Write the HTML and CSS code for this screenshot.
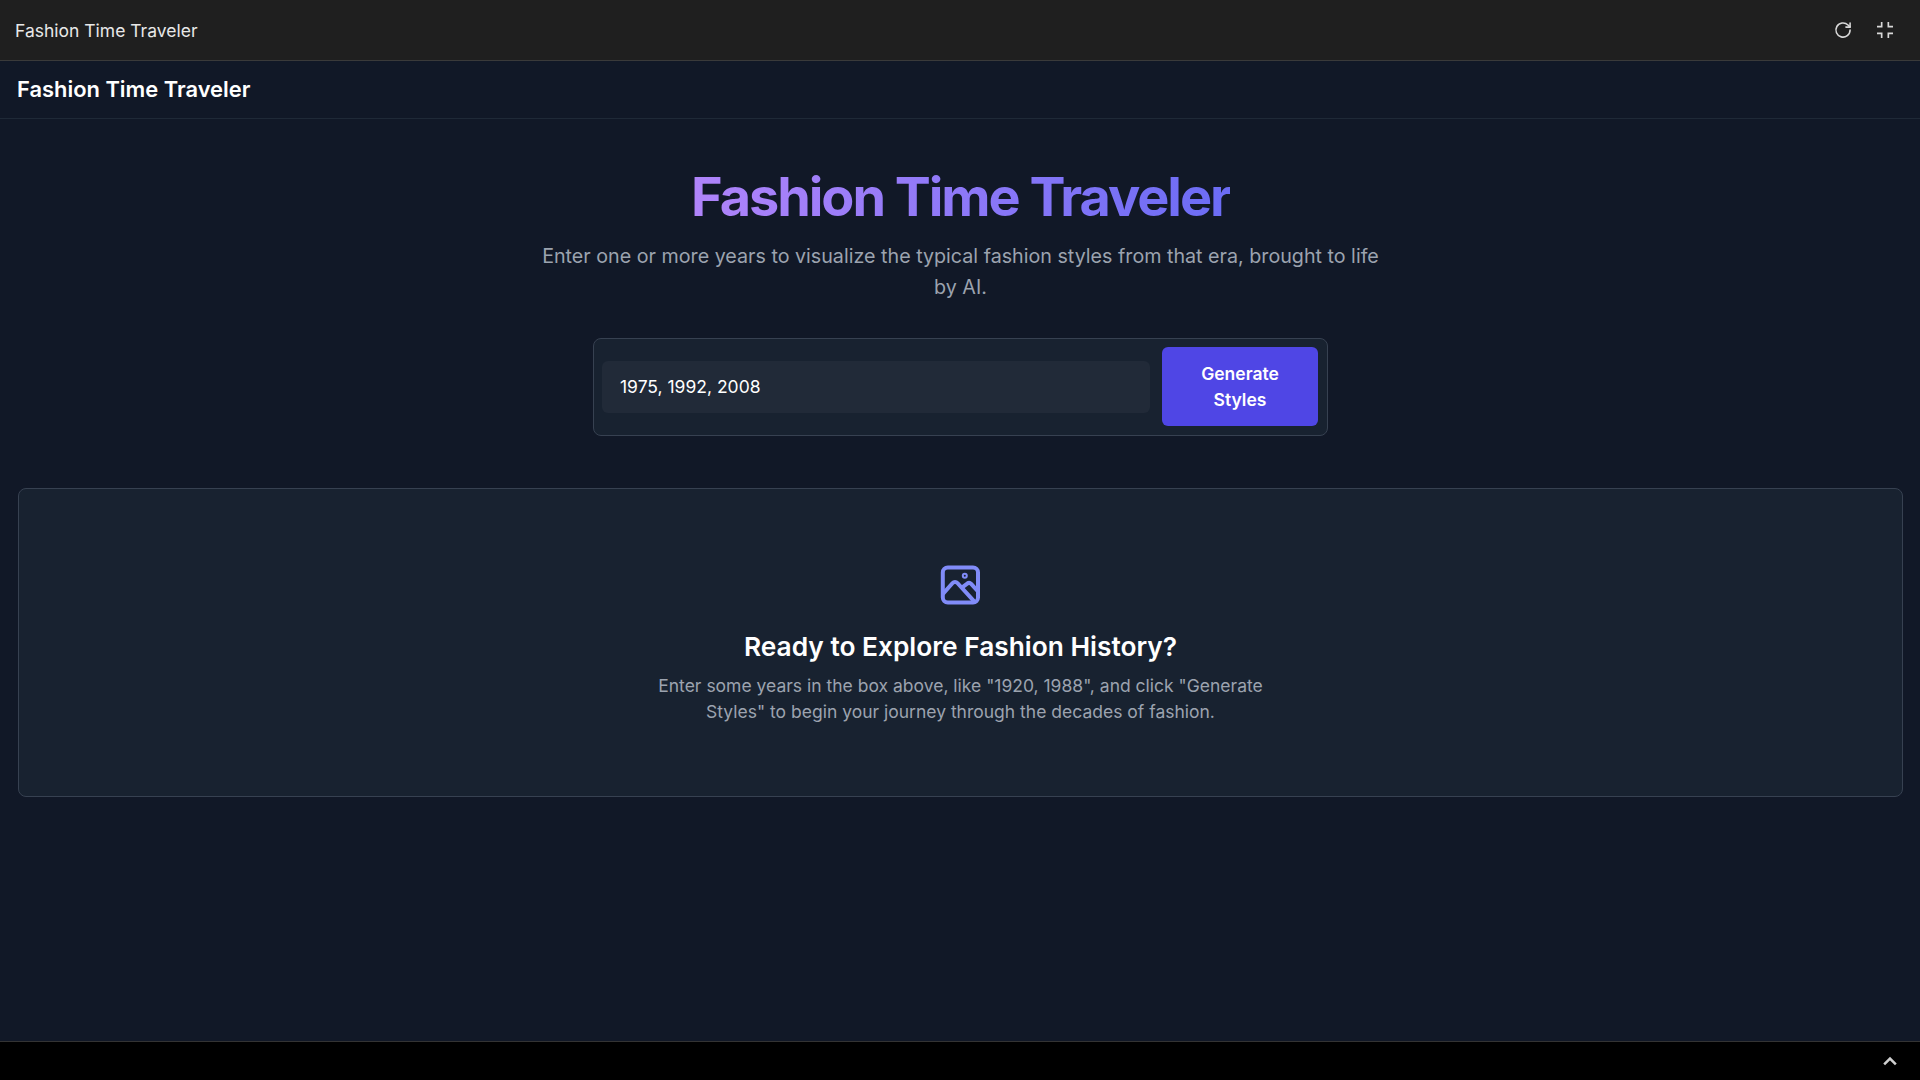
FILE: index.html
```html
<!DOCTYPE html>
<html lang="en">
<head>
  <meta charset="UTF-8">
  <meta name="viewport" content="width=device-width, initial-scale=1.0">
  <title>Fashion Time Traveler</title>
  <link rel="stylesheet" href="styles.css">
</head>
<body>
  <!-- Preview toolbar -->
  <div class="toolbar">
    <span class="toolbar-title">Fashion Time Traveler</span>
    <div class="toolbar-actions">
      <svg class="tool-icon" viewBox="0 0 24 24" fill="none" stroke="currentColor" stroke-width="1.9" stroke-linecap="round" stroke-linejoin="round">
        <path d="M20.5 12a8.5 8.5 0 1 1-2.5-6l2.5 2.5"/>
        <path d="M20.5 3.5v5h-5"/>
      </svg>
      <svg class="tool-icon" viewBox="0 0 24 24" fill="none" stroke="currentColor" stroke-width="2">
        <path d="M8 2.4V8H2.4"/>
        <path d="M16 2.4V8h5.6"/>
        <path d="M8 21.6V16H2.4"/>
        <path d="M16 21.6V16h5.6"/>
      </svg>
    </div>
  </div>

  <div class="app">
    <header class="app-header">
      <span class="app-name">Fashion Time Traveler</span>
    </header>

    <main class="content">
      <section class="hero">
        <h1>Fashion Time Traveler</h1>
        <p>Enter one or more years to visualize the typical fashion styles from that era, brought to life by AI.</p>
      </section>

      <form class="year-form">
        <input class="year-input" type="text" value="1975, 1992, 2008">
        <button class="generate-btn" type="button">Generate Styles</button>
      </form>

      <section class="empty-card">
        <svg class="empty-icon" viewBox="0 0 24 24" fill="none" stroke="currentColor" stroke-width="2" stroke-linecap="round" stroke-linejoin="round">
          <rect x="2.9" y="3.2" width="17.6" height="17.6" rx="2.5"/>
          <path d="M3.2 16.2l4.6-5.2a1.6 1.6 0 0 1 2.4 0l8.4 9.2"/>
          <path d="M13.1 12.8l2-1.5a1.5 1.5 0 0 1 2 .1l3.2 3.6"/>
          <circle cx="13.9" cy="7.4" r="0.5"/>
        </svg>
        <h2>Ready to Explore Fashion History?</h2>
        <p>Enter some years in the box above, like "1920, 1988", and click "Generate Styles" to begin your journey through the decades of fashion.</p>
      </section>
    </main>
  </div>

  <footer class="bottom-bar">
    <svg class="chevron" viewBox="0 0 24 24" fill="none" stroke="currentColor" stroke-width="3">
      <path d="M5 16l7-7 7 7"/>
    </svg>
  </footer>
</body>
</html>
```

FILE: styles.css
```css
* {
  box-sizing: border-box;
}

body {
  margin: 0;
  height: 100vh;
  display: flex;
  flex-direction: column;
  font-family: Inter, "Liberation Sans", sans-serif;
  background-color: #111827;
  color: #fff;
  overflow: hidden;
}

.toolbar {
  height: 61px;
  flex-shrink: 0;
  display: flex;
  align-items: center;
  justify-content: space-between;
  padding: 0 15px;
  background-color: #1f1f1f;
  border-bottom: 1px solid #3a3a3a;
}

.toolbar-title {
  font-size: 17.5px;
  color: #e8e8e8;
}

.toolbar-actions {
  display: flex;
  gap: 22px;
  padding-right: 10px;
  color: #d8d8d8;
}

.tool-icon {
  width: 20px;
  height: 20px;
  display: block;
}

.app {
  flex: 1;
  min-height: 0;
}

.app-header {
  height: 58px;
  display: flex;
  align-items: center;
  padding: 0 17px 1px;
  border-bottom: 1px solid #1f2937;
}

.app-name {
  font-size: 21.9px;
  font-weight: 600;
}

.content {
  padding: 0 17px 0 18px;
}

.hero {
  text-align: center;
  padding-top: 48px;
}

.hero h1 {
  margin: 0 auto;
  width: fit-content;
  font-size: 54px;
  line-height: 60px;
  font-weight: 700;
  letter-spacing: -0.038em;
  background: linear-gradient(90deg, #b084fa, #6b6cf5);
  background-clip: text;
  -webkit-background-clip: text;
  color: transparent;
}

.hero p {
  width: 850px;
  margin: 14px auto 0;
  font-size: 19.7px;
  line-height: 31px;
  color: #9ca3af;
}

.year-form {
  width: 735px;
  height: 98px;
  margin: 35px auto 0;
  display: flex;
  align-items: center;
  gap: 12px;
  padding: 8px 9px 9px 8px;
  background-color: #182230;
  border: 1px solid #374151;
  border-radius: 8px;
}

.year-input {
  flex: 1;
  min-width: 0;
  height: 52px;
  padding: 0 18px;
  font-family: inherit;
  font-size: 17.5px;
  color: #fff;
  background-color: #212a38;
  border: none;
  border-radius: 6px;
}

.generate-btn {
  width: 156px;
  height: 79px;
  flex-shrink: 0;
  padding: 0 24px;
  font-family: inherit;
  font-size: 17.5px;
  line-height: 26px;
  font-weight: 600;
  color: #fff;
  background-color: #4f46e5;
  border: none;
  border-radius: 6px;
}

.empty-card {
  height: 309px;
  margin-top: 52px;
  padding-top: 72px;
  text-align: center;
  background-color: #182230;
  border: 1px solid #374151;
  border-radius: 8px;
}

.empty-icon {
  width: 48px;
  height: 48px;
  display: block;
  margin: 0 auto;
  color: #818cf8;
}

.empty-card h2 {
  margin: 22px 0 0;
  font-size: 26.3px;
  line-height: 32px;
  font-weight: 600;
}

.empty-card p {
  width: 640px;
  margin: 10px auto 0;
  font-size: 17.5px;
  line-height: 26px;
  color: #9ca3af;
}

.bottom-bar {
  height: 39px;
  flex-shrink: 0;
  display: flex;
  align-items: center;
  justify-content: flex-end;
  padding-right: 20px;
  background-color: #000;
  border-top: 1px solid #333;
}

.chevron {
  width: 20px;
  height: 20px;
  color: #d0d0d0;
}
```
